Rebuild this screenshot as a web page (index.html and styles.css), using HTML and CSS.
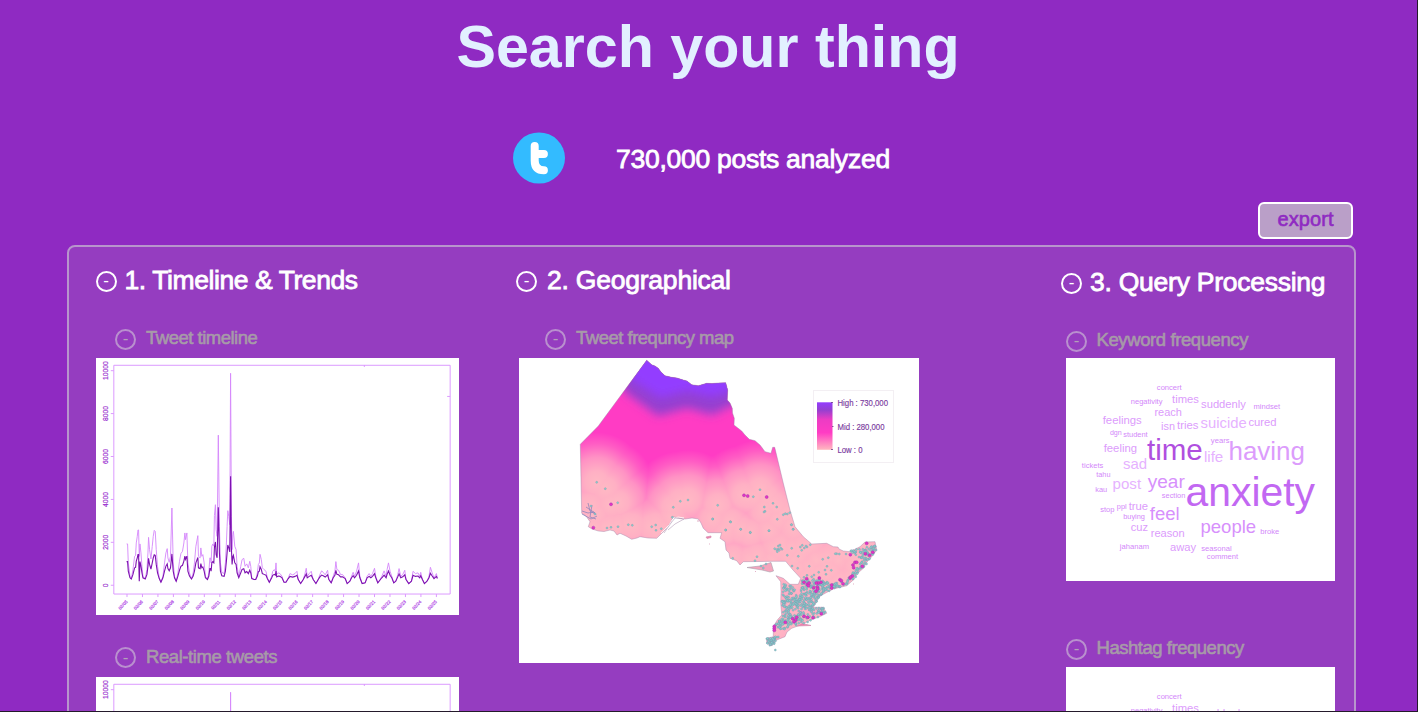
FILE: index.html
```
<!DOCTYPE html>
<html lang="en">
<head>
<meta charset="utf-8">
<title>Search your thing</title>
<link rel="stylesheet" href="styles.css">
</head>
<body>
<div class="page">
  <h1 class="title">Search your thing</h1>
  <div class="summary">
    <svg class="logo" width="52" height="52" viewBox="0 0 52 52">
      <ellipse cx="26" cy="26" rx="26" ry="25.6" fill="#33bbff"/>
      <path d="M19.4 14V28.5Q19.4 38.3 28.6 38.3M19.4 22H28.6" transform="translate(2.3 0)" fill="none" stroke="#fff" stroke-width="8" stroke-linecap="round" stroke-linejoin="round"/>
    </svg>
    <span class="count">730,000 posts analyzed</span>
  </div>
  <div class="toolbar"><button class="export">export</button></div>
  <main class="panel">
    <section class="column">
      <h2 class="heading h-time"><i class="toggle">-</i><span>1. Timeline &amp; Trends</span></h2>
      <h3 class="sub s-time"><i class="toggle">-</i><span>Tweet timeline</span></h3>
      <svg class="card timeline" viewBox="96 358 363.5 257"></svg>
      <h3 class="sub s-real"><i class="toggle">-</i><span>Real-time tweets</span></h3>
      <svg class="card timeline" viewBox="96 358 363.5 257" data-limit="392"></svg>
    </section>
    <section class="column">
      <h2 class="heading h-geo"><i class="toggle">-</i><span>2. Geographical</span></h2>
      <h3 class="sub s-map"><i class="toggle">-</i><span>Tweet frequncy map</span></h3>
      <svg class="card map" viewBox="519 358 400 304.5">
        <defs>
          <clipPath id="land"><path id="outline" d=""/></clipPath>
          <radialGradient id="spot">
            <stop offset="0" stop-color="#ffb9bf"/><stop offset=".22" stop-color="#ffb0c0"/>
            <stop offset=".5" stop-color="#ff92c2"/><stop offset=".78" stop-color="#ff5cc3"/>
            <stop offset="1" stop-color="#ff3cc4"/>
          </radialGradient>
          <linearGradient id="scale" x1="0" y1="0" x2="0" y2="1">
            <stop offset="0" stop-color="#933cff"/><stop offset=".16" stop-color="#9440d0"/>
            <stop offset=".36" stop-color="#ec3cc4"/><stop offset=".64" stop-color="#ff3cc4"/>
            <stop offset="1" stop-color="#ffb8bf"/>
          </linearGradient>
          <filter id="soft" x="-20%" y="-50%" width="140%" height="200%"><feGaussianBlur stdDeviation="5"/></filter>
        </defs>
        <g clip-path="url(#land)">
          <g class="heat">
            <rect x="570" y="355" width="320" height="300" fill="#ff3cc4"/>
            <g id="spots"></g>
          </g>
          <path d="M590 340H760V404L735 404 712 415 687 408 658 416 626 393Z" fill="#9440d0" filter="url(#soft)"/>
          <path d="M600 330H760V392L730 391 712 397 687 391 660 398 632 380Z" fill="#933cff" filter="url(#soft)"/>
        </g>
        <path id="coast" d="" fill="none" stroke="#9d7fa5" stroke-width=".6" stroke-opacity=".7"/>
        <path d="M747 567.5L760 566 771 562.5 773.5 571 770 572 762 570Z" fill="#f5a5bd" stroke="#a7a0ad" stroke-width=".6"/>
        <path d="M706 537l5-1v1.500l-4 1ZM697 521h2M709 544h1M797 626l14-.5-9-2M755 571l1 1M853 584h1" fill="#ef7fae" stroke="#d58fb0" stroke-width=".7"/>
        <path d="M582 511l6 2 6-1 2 3M588 503l2 8 5 3M586 507l9 6M592 505l-2 12 6 2M582 514l9 5 6-3" fill="none" stroke="#8f86bd" stroke-width=".8"/>
        <path d="M667 529l5-9 6-3 6 1-8 6M661 533l8-8 10-6" fill="none" stroke="#fff" stroke-width=".8"/>
        <path d="M664 533l7-10 4-5 9 1-9 5-7 6" fill="none" stroke="#a588a8" stroke-width=".5"/>
        <g id="dots"></g>
        <rect x="813.5" y="390.500" width="80" height="72" fill="#fff" stroke="#f3eff3" stroke-width="1"/>
        <rect x="817" y="402.300" width="15.500" height="47.500" fill="url(#scale)"/>
        <path d="M831 402.500h2M832 426.500h1.500M831 449.500h2" stroke="#6b3f88" stroke-width=".8"/>
        <g class="legend">
          <text x="837.500" y="406.200" textLength="50.500" lengthAdjust="spacingAndGlyphs">High : 730,000</text>
          <text x="837.500" y="429.700" textLength="47" lengthAdjust="spacingAndGlyphs">Mid : 280,000</text>
          <text x="837.500" y="453" textLength="25" lengthAdjust="spacingAndGlyphs">Low : 0</text>
        </g>
      </svg>
    </section>
    <section class="column column-query">
      <h2 class="heading h-query"><i class="toggle">-</i><span>3. Query Processing</span></h2>
      <h3 class="sub s-key"><i class="toggle">-</i><span>Keyword frequency</span></h3>
      <svg class="card cloud" viewBox="1065.5 358 269 222.5"></svg>
      <h3 class="sub s-hash"><i class="toggle">-</i><span>Hashtag frequency</span></h3>
      <svg class="card cloud" viewBox="1065.5 358 269 222.5" data-limit="410"></svg>
    </section>
  </main>
</div>
<script src="charts.js"></script>
</body>
</html>
```
FILE: styles.css
```
* { box-sizing: border-box; }
body { margin: 0; background: #241a2b; font-family: "Liberation Sans", Arial, sans-serif; overflow: hidden; }
h1, h2, h3 { margin: 0; font-weight: 400; }
.page { width: 1417px; height: 711px; overflow: hidden; background: #8f2ac2; display: flex; flex-direction: column; }
.title { height: 92px; line-height: 94px; padding-right: 1px; text-align: center; font-size: 59.2px; font-weight: 700; color: #e2f0ff; }
.summary { display: flex; align-items: center; height: 52px; margin: 40px 0 0 512.500px; gap: 51.500px; color: #fff; }
.logo { display: block; }
.count { padding-top: 2px; font-size: 26.500px; letter-spacing: -0.27px; -webkit-text-stroke: 0.8px #fff; white-space: nowrap; }
.toolbar { display: flex; justify-content: flex-end; padding: 18px 64px 0 0; }
.export { width: 95px; height: 37px; padding: 0 0 2px; border: 2.500px solid #fff; border-radius: 6px; background: #ba9fc8; color: #8f2ac2; font: 20px "Liberation Sans", Arial, sans-serif; letter-spacing: 0.1px; -webkit-text-stroke: 0.6px #8f2ac2; }
.panel { flex: none; width: 1289px; height: 600px; margin: 6px 0 0 67px; padding: 19px 0 0 26.500px; border: 2px solid #b795cc; border-radius: 8px; background: #953dc0; display: grid; grid-template-columns: 363.500px 403px 280px; column-gap: 57px; align-items: start; }
.column { display: flex; flex-direction: column; }
.column-query { margin-left: 85px; width: 280px; }
.heading { display: flex; align-items: center; height: 30px; color: #fff; font-size: 26.500px; white-space: nowrap; -webkit-text-stroke: 0.8px #fff; }
.sub { display: flex; align-items: center; height: 24px; color: #a79aa8; font-size: 18.500px; white-space: nowrap; -webkit-text-stroke: 0.6px #a79aa8; }
.heading span, .sub span { position: relative; top: -1px; }
.toggle { flex: none; display: flex; align-items: center; justify-content: center; width: 21px; height: 21px; border: 2px solid #fff; border-radius: 50%; font-style: normal; font-size: 17px; line-height: 15px; padding-bottom: 1px; letter-spacing: 0; -webkit-text-stroke: 0; }
.sub .toggle { border-color: #b990ce; color: #b3a0b8; }
.h-time { gap: 8px; letter-spacing: -0.42px; }
.s-time { gap: 10px; margin: 31px 0 7px 19.500px; letter-spacing: -0.5px; }
.s-real { gap: 10px; margin: 31px 0 7px 19.500px; letter-spacing: -0.42px; }
.h-geo { gap: 10px; letter-spacing: -0.22px; }
.s-map { gap: 10px; margin: 31px 0 7px 29px; letter-spacing: -0.5px; }
.h-query { gap: 8px; margin-top: 2px; letter-spacing: -0.25px; }
.s-key, .s-hash { gap: 9.500px; letter-spacing: -0.4px; }
.s-key { margin: 31px 0 5px 5px; }
.s-hash { margin: 56.500px 0 5.500px 5px; letter-spacing: -0.47px; }
.card { display: block; background: #fff; }
.timeline { width: 363.500px; height: 256.500px; }
.map { width: 400px; height: 304.500px; margin-left: 2.500px; }
.cloud { width: 269px; height: 222.500px; margin-left: 5px; }
.heat { isolation: isolate; }
.spot { mix-blend-mode: lighten; }
.legend { font-size: 8.800px; fill: #7a3a9e; stroke: #7a3a9e; stroke-width: 0.15px; }
.axis { fill: none; stroke: #dc9bff; stroke-width: 1px; }
.ylabel { font-size: 6.800px; fill: #9a2fd0; stroke: #9a2fd0; stroke-width: 0.2px; text-anchor: middle; }
.xlabel { font-size: 4.400px; fill: #b34be8; stroke: #b34be8; stroke-width: 0.2px; text-anchor: middle; }
.posts { fill: none; stroke: #d486fb; stroke-width: 0.9px; }
.users { fill: none; stroke: #7d12b0; stroke-width: 1.100px; }
```
FILE: charts.js
```
const NS = 'http://www.w3.org/2000/svg';
function add(parent, tag, attrs, text) {
  const el = document.createElementNS(NS, tag);
  for (const k in attrs) el.setAttribute(k, attrs[k]);
  if (text) el.textContent = text;
  parent.appendChild(el);
  return el;
}
const pairs = s => s.trim().split(/\s+/).map(p => p.split(',').map(Number));
/* Labels lower than a card's limit are below the fold and are skipped. */
const limitOf = svg => Number(svg.dataset.limit || Infinity);

/* Timeline */
const early = pairs('109,583 112,583 114,640 119,680 123,688 128,660 133,620 136,618 138,580 141,560 143,541 145,541 147,620 149,583 152,610 155,650 158,680 165,688 170,660 173,610 175,563 178,600 182,628 186,590 189,560 192,542 195,545 198,600 202,650 207,685 212,698 218,680 223,640 227,610 231,597 233,625 237,638 241,620 245,475 249,640 253,680 258,695 263,670 268,635 272,612 277,605 281,580 284,550 286,570 290,550 293,640 298,670 304,688 309,670 313,640 317,590 323,558 325,620 330,625 332,595 335,620 338,615 342,640 346,680 352,690 356,670 359,625 361,625 363,640 365,590 368,583 371,590 373,497 376,465 378,540 381,560 384.5,256 388,530 391,640 395,668 402,672 406,640 409,580 411,530 413,483 416,500 419,525 421.5,70 424,500 426,600 428,555 430,545 434,590 438,600 441,650 446,680 452,650 456,630 461,626 465,650 470,643 475,655 479,635 482,650 485,685 492,690 497,690 502,670 505,645 508,640 510,614 514,630 517,655 522,660 528,665 532,685 538,698 545,680 548,665 553,660 556,665');
const late = pairs('20,675 25,670 30,672 36,680 42,698 48,698 55,685 60,672 68,676 75,672 81,665 85,690 92,702 100,690 105,672 109,656 112,680 118,672 124,665 130,690 138,702 145,690 150,675 155,664 160,668 166,676 173,662 177,690 184,700 190,680 195,665 198,636 201,660 206,662 212,675 218,675 226,685 232,702 240,695 245,680 250,668 254,680 260,665 266,640 270,680 277,702 286,700 292,680 298,672 303,680 308,672 314,656 318,680 324,700 330,692 336,680 343,664 349,680 352,660 356,640 361,665 366,680 372,700 378,695 384,675 388,657 393,680 399,675 405,662 409,690 417,702 425,695 430,665 437,672 445,670 450,680 453,668 458,690 464,702 472,695 478,680 482,653 487,668 493,685 500,672 503,685');
const series = early.concat([[558, 640]], late.map(([x, y]) => [x + 540, y]));
const toLine = f => series.map(([x, y]) => (90 + x / 3).toFixed(1) + ',' + (350 + f(y, x) / 3).toFixed(1)).join(' ');
document.querySelectorAll('.timeline').forEach(svg => {
  const limit = limitOf(svg);
  let d = 'M113.500 365.300H450.500V594.500H113.500ZM447.500 396.500H450.500M364.500 365v2';
  for (let i = 0; i < 6; i++) {
    const y = 585.700 - i * 43;
    d += `M110.500 ${y}H113.500`;
    if (y < limit) add(svg, 'text', { class: 'ylabel', transform: `translate(107.500 ${y}) rotate(-90)` }, String(i * 2000));
  }
  for (let i = 0; i < 21; i++) {
    const x = 126.700 + i * 15.500;
    d += `M${x} 594.500v3`;
    if (606 < limit) add(svg, 'text', { class: 'xlabel', transform: `translate(${x - 3} 606.500) rotate(-45)` }, '02/' + String(i + 5).padStart(2, '0'));
  }
  add(svg, 'path', { class: 'axis', d });
  add(svg, 'polyline', { class: 'posts', points: toLine(y => y) });
  add(svg, 'polyline', { class: 'users', points: toLine((y, x) => {
    const v = 707 - y;
    if (x === 147) return 695;
    if (x === 245) return 613;
    return 707 - Math.min(v, 0.5 * v + 9);
  }) });
});

/* Word cloud: word, left, baseline, width, tone */
const words = [
  ['concert',290,106,73,1],['negativity',212,146,93,1],['times',336,143,79,0],['suddenly',423,159,132,0],['mindset',580,163,78,1],
  ['reach',283,183,81,0],['feelings',128,207,115,0],['isn',303,224,41,0],['tries',351,221,63,0],['suicide',422,219,136,2],['cured',565,212,83,0],
  ['dgn',149,241,35,1],['student',189,247,72,1],['feeling',131,291,98,0],['time',263,315,164,4],['years',452,265,55,1],['life',432,320,57,2],['having',507,316,225,0],
  ['sad',189,342,71,2],['tickets',65,340,63,1],['tahu',108,367,42,1],['post',158,402,84,2],['year',264,399,109,3],['kau',105,411,35,1],
  ['anxiety',380,452,381,5],['section',305,430,69,1],['stop',120,470,42,1],['ppl',170,461,29,1],['true',206,465,57,0],['buying',189,492,64,1],['feel',270,494,88,3],
  ['cuz',212,528,51,0],['reason',272,546,100,0],['people',422,534,164,3],['broke',600,538,56,1],['jahanam',179,581,86,1],['away',330,588,77,0],['seasonal',423,587,90,1],['comment',440,611,92,1]];
const tones = ['#dc9cfc', '#d388fa', '#e6b2ff', '#d790fc', '#b04fdf', '#c268f2'];
const ctx = document.createElement('canvas').getContext('2d');
ctx.font = '100px "Liberation Sans"';
document.querySelectorAll('.cloud').forEach(svg => words.forEach(([w, x, y, width, tone]) => {
  if (355 + y / 3 > limitOf(svg)) return;
  const size = width / 3 / ctx.measureText(w).width * 100 * 1.02;
  add(svg, 'text', { x: 1060 + x / 3 - size * 0.04, y: 355 + y / 3, fill: tones[tone], 'font-size': size.toFixed(2) }, w);
}));

/* Map */
const outline = pairs('646.7,360.3 651.7,364.7 655,366 658.3,368.3 661,372 665,375.7 671.7,377.3 677,378 683.3,380 687,381 691.7,384.7 698.3,385.7 706.7,383.3 712,383.5 718.3,383 725.7,382.7 727.7,390 727.3,400 730,403 732.3,408.3 732.5,413 734.3,418.3 734,425 741.7,431 745,435 749.3,439.3 755,440.7 760,445 765,451.7 771,453.3 772.7,447.3 774.7,447.3 783.3,483.3 790,510 795,526.7 803.3,536.7 811.7,544 826.7,543.3 833.3,546.7 838,547 839,549 843.3,551 850,551.7 860,546.7 865,542 875,541.7 876.7,550 871.7,556.7 867,562 863.3,568.3 858,573 853.3,580 846.7,585.7 833.3,589 820,596 817,601 813.3,607.3 823.3,607.3 826.7,613.3 818.3,617.3 810,620 803.3,624 791.7,628.3 787,632 785,636.7 776.7,640 771.7,645.7 766.7,643.3 766.7,638.3 773.3,636.7 773.3,626.7 777.3,620 781.7,615 780.7,603.3 781,591.7 780.7,581.7 776,575.7 783.3,578.3 790,584.3 798.3,584.3 800.7,578.3 793,570 785.7,561.3 773.3,561.3 743.3,561.7 740,565 736.7,560.7 730,558.3 729,553 726,550 725,541.7 720,538.3 721.7,532.7 708,532.7 703.3,528.3 701,523 698.3,519 692,518 685,519 678,518 673,516.7 671,522 666.7,528.3 660,535 656.7,538.3 648,538 640,536.7 637,538 631.7,539.3 626,536 620,533.3 617,535 614,531 610,530 604,531.5 598.3,531 592,529 588.3,526.7 590,521.7 586,516 581.7,513.3 580.3,444.3 598.3,426');
const outlinePath = 'M' + outline.map(p => p.join(' ')).join('L') + 'Z';
document.getElementById('outline').setAttribute('d', outlinePath);
document.getElementById('coast').setAttribute('d', outlinePath);

const at = (ox, oy, s) => pairs(s).map(([x, y]) => [ox + x / 3, oy + y / 3]);
const towns = at(510, 350, '260,397 286,416 323,458 243,468 255,492 291,534 303,532 324,530 355,524 367,526 425,530 437,525 438,541 454,536 487,502 490,472 511,454 534,450 608,507')
  .concat(at(700, 350, '53,466 38,507 91,515 77,540 122,538 151,548 207,542 160,440 180,419 219,460 230,471 193,471 195,484 192,486 232,508 250,494 256,491 262,492 269,488 274,524 280,538'));
const south = at(690, 520, '122,6 107,30 152,28 181,37 237,32 305,14 309,28 201,110 195,122 128,115 292,106 325,109 358,139 398,118 415,113 440,101 436,101 448,102 468,102 386,157 405,150 408,163 424,151 411,139 306,138 323,145 254,86 260,89 265,78 272,84 276,88 262,95 270,75 265,87 268,91 331,81 337,76 343,84 351,81 361,74 335,91 348,78 305,85 213,138 228,132 220,144 256,390 342,172 351,166 365,170 372,165');
const majors = at(510, 350, '303,463 250,533').concat(at(700, 350, '132,436 143,438 200,441'),
  at(690, 520, '530,70 548,97 539,106 526,101 481,104 489,135 495,127 500,127 491,143 517,139 480,174 487,168 482,171 450,179 454,182 459,191 425,195 425,204 388,174 393,187 385,189 379,189 382,201 383,207 378,214 371,203 350,176 342,187 352,193 357,189 355,197 394,281 369,293 353,292 342,289 320,292 317,300 312,305 308,296 286,307 253,319 253,325 253,331'));
const spots = document.getElementById('spots');
const glow = towns.concat(majors.slice(0, 5), south, majors.slice(5));
for (let x = 750; x < 880; x += 22) for (let y = 560; y < 650; y += 22) glow.push([x, y]);
glow.forEach(([cx, cy]) => add(spots, 'circle', { class: 'spot', cx, cy, r: 50, fill: 'url(#spot)' }));

let seed = 11;
const rnd = () => (seed = (seed * 16807) % 2147483647) / 2147483647;
const inside = (poly, x, y) => poly.reduce((c, [xi, yi], i) => {
  const [xj, yj] = poly[(i + poly.length - 1) % poly.length];
  return (yi > y) !== (yj > y) && x < (xj - xi) * (y - yi) / (yj - yi) + xi ? !c : c;
}, false);
function scatter(n, poly) {
  const xs = poly.map(p => p[0]), ys = poly.map(p => p[1]);
  const x0 = Math.min(...xs), x1 = Math.max(...xs), y0 = Math.min(...ys), y1 = Math.max(...ys);
  const out = [];
  while (out.length < n) {
    const x = x0 + rnd() * (x1 - x0), y = y0 + rnd() * (y1 - y0);
    if (inside(poly, x, y)) out.push([x, y]);
  }
  return out;
}
const dense = [
  [230, at(690, 520, '340,175 395,180 425,190 455,185 490,165 470,197 430,207 390,228 370,262 340,265 310,255 330,225 330,190')],
  [170, at(690, 520, '275,240 330,235 365,262 400,262 410,280 385,292 340,312 300,318 270,300 280,280')],
  [60, at(690, 520, '275,190 325,200 320,245 275,250')],
  [95, at(690, 520, '480,92 555,75 560,90 520,145 490,180 475,175 515,125')],
  [55, at(690, 520, '232,357 270,345 295,325 300,310 270,300 252,320 280,330 250,375 232,372')],
  [22, at(690, 520, '230,355 250,355 250,377 232,375')]
];
const dots = document.getElementById('dots');
const dot = ([cx, cy]) => add(dots, 'circle', { cx: cx.toFixed(1), cy: cy.toFixed(1), r: 1, fill: '#86d6cc', stroke: '#7c8fae', 'stroke-width': 0.4 });
towns.concat(south).forEach(dot);
dense.forEach(([n, poly]) => scatter(n, poly).forEach(dot));
majors.forEach(([cx, cy]) => add(dots, 'circle', { cx, cy, r: 1.5, fill: '#e82fc4', stroke: '#a03fb0', 'stroke-width': 0.5 }));
```
